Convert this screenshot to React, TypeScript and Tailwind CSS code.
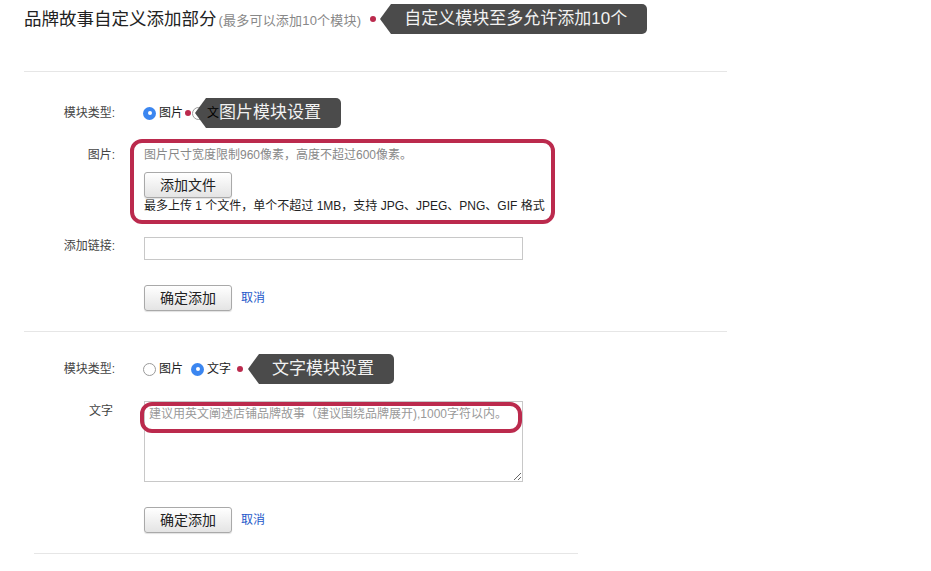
import { PropsWithChildren } from 'react';
import clsx from 'clsx';

function Radio({ checked = false, className }: { checked?: boolean; className?: string }) {
  if (checked) {
    return (
      <span className={clsx('flex h-[13px] w-[13px] shrink-0 items-center justify-center rounded-full bg-[#3b86f0]', className)}>
        <span className="h-[4px] w-[4px] rounded-full bg-white" />
      </span>
    );
  }
  return <span className={clsx('h-[13px] w-[13px] shrink-0 rounded-full border border-[#9a9a9a] bg-white', className)} />;
}

function Dot({ className }: { className?: string }) {
  return <span className={clsx('h-[6px] w-[6px] shrink-0 rounded-full bg-[#bb2a4d]', className)} />;
}

// dark callout with an arrow pointing left
function Tip({ text, className }: { text: string; className?: string }) {
  return (
    <div className={clsx('flex h-[30px]', className)}>
      <span className="h-0 w-0 border-y-[15px] border-r-[11px] border-y-transparent border-r-[#4b4b4b]" />
      <span className="flex items-center whitespace-nowrap rounded-r-[5px] bg-[#4b4b4b] pl-[13px] pr-[20px] text-[17px] text-[#f2f2f2]">
        {text}
      </span>
    </div>
  );
}

function Row({ label, className, labelClass, children }: PropsWithChildren<{ label: string; className?: string; labelClass?: string }>) {
  return (
    <div className={clsx('flex', className)}>
      <div className={clsx('w-[91px] shrink-0 text-right text-[12px] leading-[18px] text-[#444]', labelClass)}>{label}</div>
      <div className="relative ml-[29px] flex-1">{children}</div>
    </div>
  );
}

function Btn({ children }: PropsWithChildren) {
  return (
    <button className="h-[26px] w-[88px] rounded-[3px] border border-[#a9a9a9] bg-gradient-to-b from-white to-[#e4e4e4] text-[14px] text-[#222] shadow-[0_1px_1px_rgba(0,0,0,0.12)]">
      {children}
    </button>
  );
}

function Actions({ className }: { className?: string }) {
  return (
    <Row label="" className={className}>
      <div className="flex items-center">
        <Btn>确定添加</Btn>
        <a className="ml-[9px] text-[12px] text-[#1d58c9]">取消</a>
      </div>
    </Row>
  );
}

export default function App() {
  return (
    <div className="min-h-screen bg-white pl-[24px] font-['Liberation_Sans','Noto_Sans_CJK_SC',sans-serif] text-[#333]">
      {/* Heading */}
      <div className="mt-[4px] flex h-[30px] items-center">
        <div className="flex items-baseline">
          <h1 className="text-[17.5px] text-[#222]">品牌故事自定义添加部分</h1>
          <span className="ml-[2px] text-[13px] tracking-[0.2px] text-[#888]">(最多可以添加10个模块)</span>
        </div>
        <Dot className="ml-[9px]" />
        <Tip text="自定义模块至多允许添加10个" className="ml-[4px]" />
      </div>

      <div className="mt-[37px] h-px w-[703px] bg-[#e6e6e6]" />

      {/* Image module */}
      <Row label="模块类型:" className="mt-[26px] h-[30px] items-center">
        <div className="flex h-[30px] items-center text-[12px] text-[#222]">
          <Radio checked className="-ml-[1px]" />
          <span className="ml-[3px]">图片</span>
          <Dot className="ml-[2px]" />
          <Radio className="ml-[1px]" />
          <span className="relative z-20 ml-[2px] text-black">文</span>
          <span>字</span>
          <Tip text="图片模块设置" className="absolute left-[51px] top-0 z-10" />
        </div>
      </Row>

      <Row label="图片:" className="mt-[18px]">
        <div className="text-[12px] leading-[18px] text-[#888]">图片尺寸宽度限制960像素，高度不超过600像素。</div>
        <div className="mt-[8px]">
          <Btn>添加文件</Btn>
        </div>
        <div className="text-[12px] leading-[16px] text-[#222]">最多上传 1 个文件，单个不超过 1MB，支持 JPG、JPEG、PNG、GIF 格式</div>
        <div className="pointer-events-none absolute -left-[14px] -top-[7px] h-[85px] w-[425px] rounded-[12px] border-[4px] border-[#bb2a4d]" />
      </Row>

      <Row label="添加链接:" className="mt-[23px]">
        <input className="block h-[23px] w-[379px] border border-[#c8c8c8] bg-white outline-none" />
      </Row>

      <Actions className="mt-[25px]" />

      <div className="mt-[20px] h-px w-[703px] bg-[#e6e6e6]" />

      {/* Text module */}
      <Row label="模块类型:" className="mt-[22px] h-[30px] items-center">
        <div className="flex h-[30px] items-center text-[12px] text-[#222]">
          <Radio className="-ml-[1px]" />
          <span className="ml-[3px]">图片</span>
          <Radio checked className="ml-[8px]" />
          <span className="ml-[3px]">文字</span>
          <Dot className="ml-[6px]" />
          <Tip text="文字模块设置" className="ml-[5px]" />
        </div>
      </Row>

      <Row label="文字" className="mt-[17px]" labelClass="pr-[2px] pt-[1px] leading-[16px]">
        <textarea
          className="block h-[81px] w-[379px] border border-[#c8c8c8] bg-white px-[4px] py-[3px] text-[12px] outline-none placeholder:text-[#999]"
          placeholder="建议用英文阐述店铺品牌故事（建议围绕品牌展开),1000字符以内。"
        />
        <div className="pointer-events-none absolute -left-[4px] top-[1px] h-[31px] w-[382px] rounded-[12px] border-[4px] border-[#bb2a4d]" />
      </Row>

      <Actions className="mt-[25px]" />

      <div className="ml-[10px] mt-[20px] h-px w-[544px] bg-[#e6e6e6]" />
    </div>
  );
}
